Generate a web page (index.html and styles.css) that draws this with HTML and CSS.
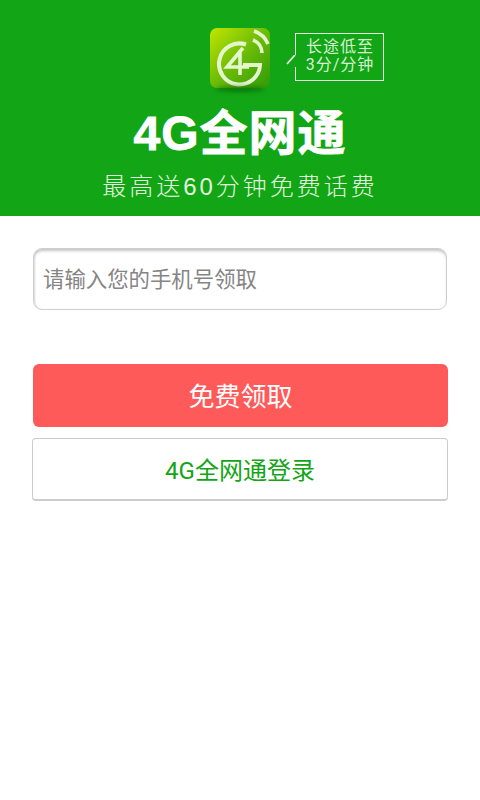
FILE: index.html
```html
<!DOCTYPE html>
<html lang="zh-CN">
<head>
<meta charset="utf-8">
<title>4G全网通</title>
<link rel="stylesheet" href="styles.css">
</head>
<body>
<header class="banner">
  <div class="promo">
    <div class="app-icon">
      <svg viewBox="0 0 60 60" width="60" height="60" aria-hidden="true">
        <defs>
          <linearGradient id="tile" x1="0" y1="0" x2="1" y2="1">
            <stop offset="0" stop-color="#c2e600"/>
            <stop offset="0.5" stop-color="#6cbc08"/>
            <stop offset="1" stop-color="#2f9a08"/>
          </linearGradient>
        </defs>
        <rect x="0" y="0" width="60" height="60" rx="7" fill="url(#tile)"/>
        <path d="M36 16.500A20.500 20.500 0 1 0 50 37H33" fill="none" stroke="#e4f6cc" stroke-width="4"/>
        <path d="M33 20L17 39H39M30 22V47" fill="none" stroke="#e4f6cc" stroke-width="3.6"/>
        <path d="M43 12A14 14 0 0 1 52 25M44 3A23 23 0 0 1 58 16" fill="none" stroke="#e4f6cc" stroke-width="3.6"/>
      </svg>
      <div class="icon-shadow"></div>
    </div>
    <div class="callout">
      <svg class="callout-tail" viewBox="0 0 12 12" width="12" height="12" aria-hidden="true">
        <path d="M9 0H12V12H9Z" fill="#12a516"/>
        <path d="M10 0L2 9" fill="none" stroke="#e4f5e0" stroke-width="1.8"/>
      </svg>
      <p>长途低至</p>
      <p>3分/分钟</p>
    </div>
  </div>
  <h1 class="headline">4G全网通</h1>
  <p class="subline">最高送60分钟免费话费</p>
</header>
<main class="form">
  <input class="phone" type="text" placeholder="请输入您的手机号领取">
  <button class="btn btn-primary" type="button">免费领取</button>
  <button class="btn btn-outline" type="button">4G全网通登录</button>
</main>
</body>
</html>
```
FILE: styles.css
```css
* { box-sizing: border-box; }
html, body { margin: 0; padding: 0; }
body {
  width: 480px;
  height: 800px;
  overflow: hidden;
  background: #fff;
  font-family: Roboto, "Noto Sans CJK SC", sans-serif;
}
.banner {
  height: 216px;
  background: #12a516;
  color: #fff;
  padding-top: 28px;
  display: flex;
  flex-direction: column;
  align-items: center;
}
.promo {
  display: flex;
  align-items: flex-start;
  width: 480px;
  padding-left: 210px;
  gap: 25px;
  height: 73px;
}
.app-icon { position: relative; width: 60px; height: 60px; }
.app-icon svg { display: block; position: relative; }
.icon-shadow {
  position: absolute;
  left: 6px;
  right: 6px;
  top: 58px;
  height: 6px;
  border-radius: 50%;
  background: rgba(0, 70, 0, 0.45);
  filter: blur(2px);
}
.callout {
  position: relative;
  width: 89px;
  height: 48px;
  margin-top: 5px;
  border: 1.5px solid #e4f5e0;
  padding-top: 4px;
  padding-left: 1px;
  text-align: center;
  font-size: 16px;
  line-height: 18px;
  letter-spacing: 1px;
  color: #d8f0d2;
}
.callout p { margin: 0; }
.callout-tail {
  position: absolute;
  left: -11px;
  top: 21px;
}
.headline {
  margin: 0;
  height: 60px;
  font-family: "Liberation Sans", "Noto Sans CJK SC", sans-serif;
  font-size: 48px;
  line-height: 66px;
  font-weight: 700;
  letter-spacing: 1px;
  -webkit-text-stroke: 0.8px #fff;
}
.subline {
  margin: 12px 0 0;
  font-family: "Liberation Sans", "Noto Sans CJK SC", sans-serif;
  font-size: 24px;
  line-height: 28px;
  letter-spacing: 3px;
  font-weight: 300;
  color: #e2f5de;
}
.form {
  padding: 32px 32px 0;
  display: flex;
  flex-direction: column;
}
.phone {
  width: 414px;
  height: 62px;
  margin-left: 1px;
  padding: 3px 9px 0;
  border: 1px solid #cfcfcf;
  border-radius: 9px;
  box-shadow: inset 0 3px 3px -1px #c4c4c4, inset 2px 0 2px -1px #dcdcdc;
  background: #fff;
  font: 21.4px "Liberation Sans", "Noto Sans CJK SC", sans-serif;
  outline: none;
}
.phone::placeholder { color: #858585; opacity: 1; }
.btn {
  display: block;
  height: 63px;
  font-family: Roboto, "Noto Sans CJK SC", sans-serif;
  padding: 0;
}
.btn-primary {
  width: 415px;
  margin: 54px 0 0 1px;
  border: 0;
  border-radius: 6px;
  background: #ff5a5a;
  color: #fff;
  font-size: 26px;
  padding-bottom: 2px;
}
.btn-outline {
  width: 416px;
  margin-top: 11px;
  border: 1px solid #cccccc;
  border-bottom-width: 2px;
  border-radius: 4px;
  background: #fff;
  color: #12a516;
  font-size: 24px;
  padding-bottom: 2px;
}
```
